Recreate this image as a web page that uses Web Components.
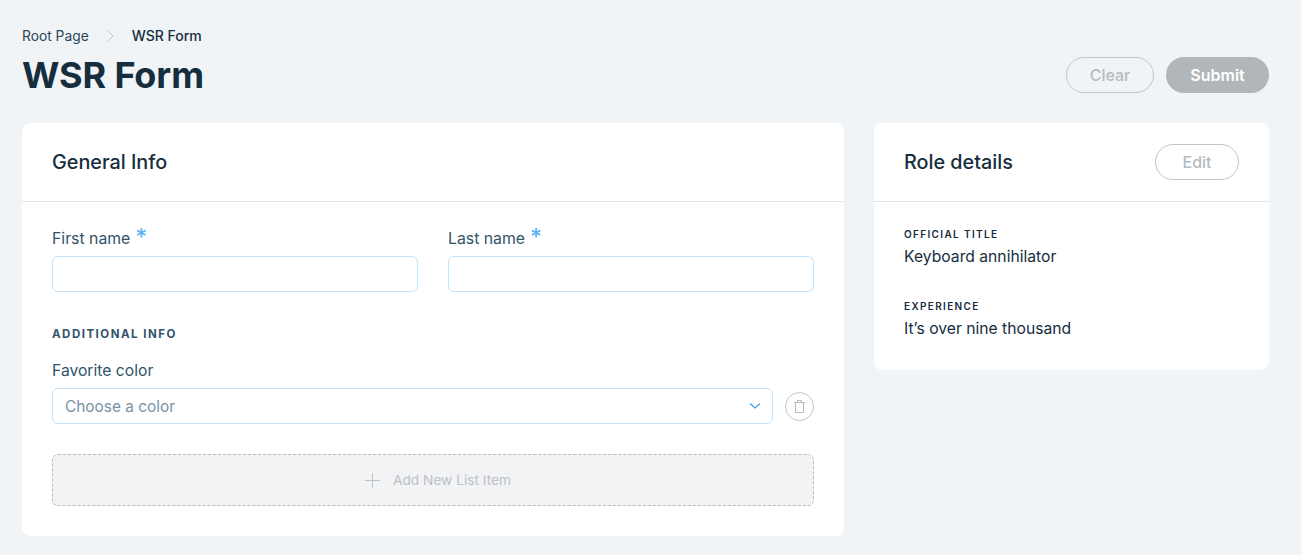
<!DOCTYPE html>
<html>
<head>
<meta charset="utf-8">
<title>WSR Form</title>
<style>
html, body { margin: 0; padding: 0; }
body {
    background: #f0f4f7;
    font-family: Inter, "Liberation Sans", sans-serif;
    color: #162d3d;
}
</style>
</head>
<body>
<form-page>
    <page-header slot="header" crumb="Root Page" current="WSR Form" heading="WSR Form">
        <pill-button variant="outline" style="width:88px">Clear</pill-button>
        <pill-button variant="solid" style="width:103px">Submit</pill-button>
    </page-header>

    <info-card slot="main" heading="General Info">
        <div style="display:grid;grid-template-columns:366px 366px;column-gap:30px">
            <text-field label="First name" required></text-field>
            <text-field label="Last name" required></text-field>
        </div>
        <section-label style="margin-top:34px">ADDITIONAL INFO</section-label>
        <select-row label="Favorite color" placeholder="Choose a color" style="margin-top:16px"></select-row>
        <add-item style="margin-top:30px">Add New List Item</add-item>
    </info-card>

    <info-card slot="side" heading="Role details">
        <pill-button slot="action" variant="outline" style="width:84px">Edit</pill-button>
        <detail-item label="OFFICIAL TITLE" style="margin-top:2px">Keyboard annihilator</detail-item>
        <detail-item label="EXPERIENCE" style="margin-top:31px;margin-bottom:-1px">It’s over nine thousand</detail-item>
    </info-card>
</form-page>

<script>
class FormPage extends HTMLElement {
    constructor() {
        super();
        this.attachShadow({ mode: "open" });
        this.shadowRoot.innerHTML = `
            <style>
            :host { display: block; padding: 0 32px 19px 22px; }
            .columns {
                display: grid;
                grid-template-columns: 822px 395px;
                column-gap: 30px;
                align-items: start;
            }
            </style>
            <slot name="header"></slot>
            <div class="columns">
                <slot name="main"></slot>
                <slot name="side"></slot>
            </div>
        `;
    }
}

class PageHeader extends HTMLElement {
    constructor() {
        super();
        this.attachShadow({ mode: "open" });
        this.shadowRoot.innerHTML = `
            <style>
            :host { display: flex; justify-content: space-between; align-items: flex-end; height: 123px; box-sizing: border-box; padding: 27px 0 26px; }
            .crumbs { display: flex; align-items: center; height: 18px; font-size: 13.8px; line-height: 18px; color: #2b4559; }
            .crumbs b { font-weight: 500; color: #162d3d; font-size: 14px; }
            .crumbs svg { margin: 0 18px 0 17px; display: block; }
            h1 { margin: 8px 0 0; font-size: 36px; line-height: 44px; font-weight: 700; color: #162d3d; letter-spacing: -0.12px; }
            .actions { display: flex; gap: 12px; margin-bottom: 4px; }
            </style>
            <div>
                <div class="crumbs">
                    <span>${this.getAttribute("crumb")}</span>
                    <svg width="8" height="14" viewBox="0 0 8 14"><path d="M1 .8 7 7 1 13.2" fill="none" stroke="#c1c6cc" stroke-width="1"/></svg>
                    <b>${this.getAttribute("current")}</b>
                </div>
                <h1>${this.getAttribute("heading")}</h1>
            </div>
            <div class="actions"><slot></slot></div>
        `;
    }
}

class PillButton extends HTMLElement {
    constructor() {
        super();
        this.attachShadow({ mode: "open" });
        this.shadowRoot.innerHTML = `
            <style>
            :host {
                display: inline-flex;
                align-items: center;
                justify-content: center;
                box-sizing: border-box;
                height: 36px;
                border-radius: 18px;
                font-size: 16px;
                font-weight: 500;
            }
            :host([variant="outline"]) { border: 1px solid #c1c6ca; color: #b6bbc0; }
            :host([variant="solid"]) { background: #b0b6ba; color: #fff; font-weight: 600; }
            </style>
            <slot></slot>
        `;
    }
}

class InfoCard extends HTMLElement {
    constructor() {
        super();
        this.attachShadow({ mode: "open" });
        this.shadowRoot.innerHTML = `
            <style>
            :host { display: block; background: #fff; border-radius: 8px; }
            header {
                display: flex;
                align-items: center;
                justify-content: space-between;
                box-sizing: border-box;
                height: 79px;
                padding: 0 30px;
                border-bottom: 1px solid #dfe5eb;
            }
            h2 { margin: 0; font-size: 19.8px; line-height: 24px; font-weight: 500; color: #162d3d; }
            .body { padding: 24px 30px 30px; }
            </style>
            <header>
                <h2>${this.getAttribute("heading")}</h2>
                <slot name="action"></slot>
            </header>
            <div class="body"><slot></slot></div>
        `;
    }
}

class TextField extends HTMLElement {
    constructor() {
        super();
        this.attachShadow({ mode: "open" });
        const star = this.hasAttribute("required") ? `<span class="star">*</span>` : "";
        this.shadowRoot.innerHTML = `
            <style>
            :host { display: block; }
            label { display: flex; height: 24px; padding-top: 1px; font-size: 15.8px; line-height: 24px; color: #32536a; margin-bottom: 5px; }
            .star { color: #5ab4f5; font-size: 23px; line-height: 22px; margin: -1px 0 0 5px; font-weight: 500; }
            .box { box-sizing: border-box; height: 36px; border: 1px solid #c1e4fe; border-radius: 6px; background: #fff; }
            </style>
            <label>${this.getAttribute("label")}${star}</label>
            <div class="box"></div>
        `;
    }
}

class SectionLabel extends HTMLElement {
    constructor() {
        super();
        this.attachShadow({ mode: "open" });
        this.shadowRoot.innerHTML = `
            <style>
            :host { display: block; font-size: 11.5px; line-height: 16px; font-weight: 700; letter-spacing: 1.5px; color: #32536a; }
            </style>
            <slot></slot>
        `;
    }
}

class SelectRow extends HTMLElement {
    constructor() {
        super();
        this.attachShadow({ mode: "open" });
        this.shadowRoot.innerHTML = `
            <style>
            :host { display: block; }
            label { display: block; padding-top: 1px; font-size: 15.7px; line-height: 24px; color: #32536a; margin-bottom: 5px; }
            .row { display: flex; align-items: center; gap: 12px; }
            .select {
                flex: 1;
                display: flex;
                align-items: center;
                justify-content: space-between;
                box-sizing: border-box;
                height: 36px;
                padding: 0 11px 0 12px;
                border: 1px solid #c1e4fe;
                border-radius: 6px;
                font-size: 15.4px;
                color: #7a92a5;
            }
            .trash {
                box-sizing: border-box;
                width: 29px;
                height: 29px;
                border: 1px solid #c1c6ca;
                border-radius: 50%;
                display: flex;
                align-items: center;
                justify-content: center;
            }
            svg { display: block; }
            </style>
            <label>${this.getAttribute("label")}</label>
            <div class="row">
                <div class="select">
                    <span>${this.getAttribute("placeholder")}</span>
                    <svg width="12" height="8" viewBox="0 0 12 8"><path d="M1 1.500 6 6l5-4.500" fill="none" stroke="#3899ec" stroke-width="1.100"/></svg>
                </div>
                <div class="trash">
                    <svg width="11" height="13" viewBox="0 0 11 13" fill="none" stroke="#b6bbc0" stroke-width="1">
                        <path d="M0 2.500h11M3.500 2.500v-2h4v2M1.500 2.500v10h8v-10"/>
                    </svg>
                </div>
            </div>
        `;
    }
}

class AddItem extends HTMLElement {
    constructor() {
        super();
        this.attachShadow({ mode: "open" });
        this.shadowRoot.innerHTML = `
            <style>
            :host {
                display: flex;
                align-items: center;
                justify-content: center;
                gap: 13px;
                box-sizing: border-box;
                height: 52px;
                padding-left: 10px;
                background: #f2f3f5;
                border: 1px dashed #b6bbc0;
                border-radius: 6px;
                font-size: 13.7px;
                color: #bcc1c5;
            }
            svg { display: block; }
            </style>
            <svg width="15" height="15" viewBox="0 0 15 15"><path d="M7.500 0v15M0 7.500h15" stroke="#bcc1c5" stroke-width="1"/></svg>
            <span><slot></slot></span>
        `;
    }
}

class DetailItem extends HTMLElement {
    constructor() {
        super();
        this.attachShadow({ mode: "open" });
        this.shadowRoot.innerHTML = `
            <style>
            :host { display: block; }
            .label { font-size: 10px; line-height: 12px; font-weight: 600; letter-spacing: 1.35px; color: #162d3d; }
            .value { margin-top: 5px; font-size: 15.7px; line-height: 24px; color: #162d3d; }
            </style>
            <div class="label">${this.getAttribute("label")}</div>
            <div class="value"><slot></slot></div>
        `;
    }
}

customElements.define("form-page", FormPage);
customElements.define("page-header", PageHeader);
customElements.define("pill-button", PillButton);
customElements.define("info-card", InfoCard);
customElements.define("text-field", TextField);
customElements.define("section-label", SectionLabel);
customElements.define("select-row", SelectRow);
customElements.define("add-item", AddItem);
customElements.define("detail-item", DetailItem);
</script>
</body>
</html>
